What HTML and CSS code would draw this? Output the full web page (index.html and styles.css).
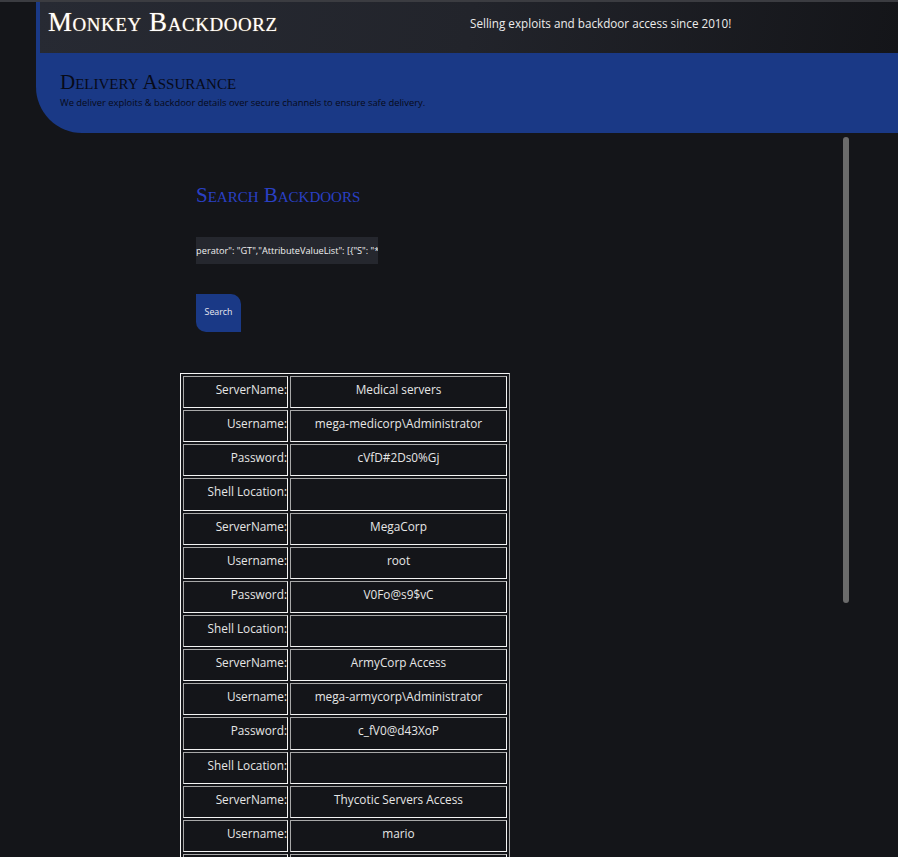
FILE: index.html
```html
<!DOCTYPE html>
<html lang="en">
<head>
<meta charset="utf-8">
<title>Monkey Backdoorz</title>
<link rel="stylesheet" href="styles.css">
</head>
<body>
<div class="topline"></div>
<div class="top">
  <header class="masthead">
    <h1 class="brand">Monkey Backdoorz</h1>
    <p class="tagline">Selling exploits and backdoor access since 2010!</p>
  </header>
  <section class="banner">
    <h2 class="banner-title">Delivery Assurance</h2>
    <p class="banner-text">We deliver exploits &amp; backdoor details over secure channels to ensure safe delivery.</p>
  </section>
</div>
<div class="page">
  <main class="main">
    <h2 class="search-title">Search Backdoors</h2>
    <div class="query"><span class="query-text">{"ServerName": {"ComparisonOperator": "GT","AttributeValueList": [{"S": "*"}]}}</span></div>
    <button class="search-btn">Search</button>
    <table class="results">
      <tr><td class="lbl">ServerName:</td><td class="val">Medical servers</td></tr>
      <tr><td class="lbl">Username:</td><td class="val">mega-medicorp\Administrator</td></tr>
      <tr><td class="lbl">Password:</td><td class="val">cVfD#2Ds0%Gj</td></tr>
      <tr><td class="lbl">Shell Location:</td><td class="val"></td></tr>
      <tr><td class="lbl">ServerName:</td><td class="val">MegaCorp</td></tr>
      <tr><td class="lbl">Username:</td><td class="val">root</td></tr>
      <tr><td class="lbl">Password:</td><td class="val">V0Fo@s9$vC</td></tr>
      <tr><td class="lbl">Shell Location:</td><td class="val"></td></tr>
      <tr><td class="lbl">ServerName:</td><td class="val">ArmyCorp Access</td></tr>
      <tr><td class="lbl">Username:</td><td class="val">mega-armycorp\Administrator</td></tr>
      <tr><td class="lbl">Password:</td><td class="val">c_fV0@d43XoP</td></tr>
      <tr><td class="lbl">Shell Location:</td><td class="val"></td></tr>
      <tr><td class="lbl">ServerName:</td><td class="val">Thycotic Servers Access</td></tr>
      <tr><td class="lbl">Username:</td><td class="val">mario</td></tr>
      <tr><td class="lbl">&nbsp;</td><td class="val">&nbsp;</td></tr>
    </table>
  </main>
  <div class="scroll-thumb"></div>
</div>
</body>
</html>
```
FILE: styles.css
```css
html, body {
  margin: 0;
  padding: 0;
  background: #141519;
  height: 857px;
  overflow: hidden;
}
body {
  font-family: "Open Sans", "Noto Sans", sans-serif;
  color: #e4e4e4;
}
.topline {
  height: 2px;
  background: #3b3c41;
}
.top {
  margin-left: 36px;
  background: #1a3986;
  border-bottom-left-radius: 46px;
}
.masthead {
  margin-left: 4px;
  height: 51px;
  background: linear-gradient(100deg, #272a33 0%, #22242b 50%, #141519 100%);
  display: flex;
  align-items: flex-start;
}
.brand {
  margin: 4px 0 0 8px;
  font-family: "Liberation Serif", "DejaVu Serif", serif;
  font-variant: small-caps;
  font-weight: normal;
  font-size: 27px;
  line-height: 32px;
  color: #ffffff;
  letter-spacing: 0.55px;
  text-shadow: 0 0 1px #c8a060;
  width: 422px;
  flex-shrink: 0;
}
.tagline {
  margin: 13px 0 0 0;
  font-size: 11.7px;
  line-height: 16px;
  color: #ececec;
  white-space: nowrap;
}
.banner {
  height: 80px;
  padding-left: 24px;
  box-sizing: border-box;
  padding-top: 16px;
}
.banner-title {
  margin: 0;
  font-family: "Liberation Serif", "DejaVu Serif", serif;
  font-variant: small-caps;
  font-weight: normal;
  font-size: 21px;
  line-height: 26px;
  color: #070a18;
}
.banner-text {
  margin: 2px 0 0 0;
  font-size: 9.4px;
  line-height: 12px;
  color: #070a18;
}
.page {
  display: flex;
}
.main {
  flex: 1;
  padding-left: 180px;
  padding-top: 49px;
}
.search-title {
  margin: 0 0 0 16px;
  font-family: "Liberation Serif", "DejaVu Serif", serif;
  font-variant: small-caps;
  font-weight: normal;
  font-size: 21px;
  line-height: 26px;
  color: #2a40c4;
}
.query {
  margin: 29px 0 0 16px;
  width: 182px;
  height: 27px;
  background: #25272e;
  overflow: hidden;
  white-space: nowrap;
  display: flex;
  align-items: center;
}
.query-text {
  font-size: 9.2px;
  color: #f0f0f0;
  margin-left: -135px;
  flex-shrink: 0;
}
.search-btn {
  display: block;
  margin: 30px 0 0 16px;
  width: 45px;
  height: 38px;
  padding: 0 0 2px 0;
  border: none;
  background: #1a3986;
  color: #e8e8f0;
  font-family: "Open Sans", "Noto Sans", sans-serif;
  font-size: 8.8px;
  border-radius: 0 10px 0 10px;
}
.results {
  margin-top: 41px;
  border-collapse: separate;
  border-spacing: 2px;
  border: 1px solid;
  border-color: #f4f4f4 #a8a8a8 #a8a8a8 #f4f4f4;
}
.results td {
  border: 1px solid;
  border-color: #a8a8a8 #f4f4f4 #f4f4f4 #a8a8a8;
  padding: 0 0 6px 0;
  font-size: 11.8px;
  color: #e6e6e6;
  box-sizing: border-box;
  height: 32.15px;
}
.results .lbl {
  width: 105px;
  text-align: right;
}
.results .val {
  width: 217px;
  text-align: center;
}
.scroll-thumb {
  width: 6px;
  height: 466px;
  margin: 4px 49px 0 0;
  background: #6b6b6b;
  border-radius: 3px;
  flex-shrink: 0;
}
```
